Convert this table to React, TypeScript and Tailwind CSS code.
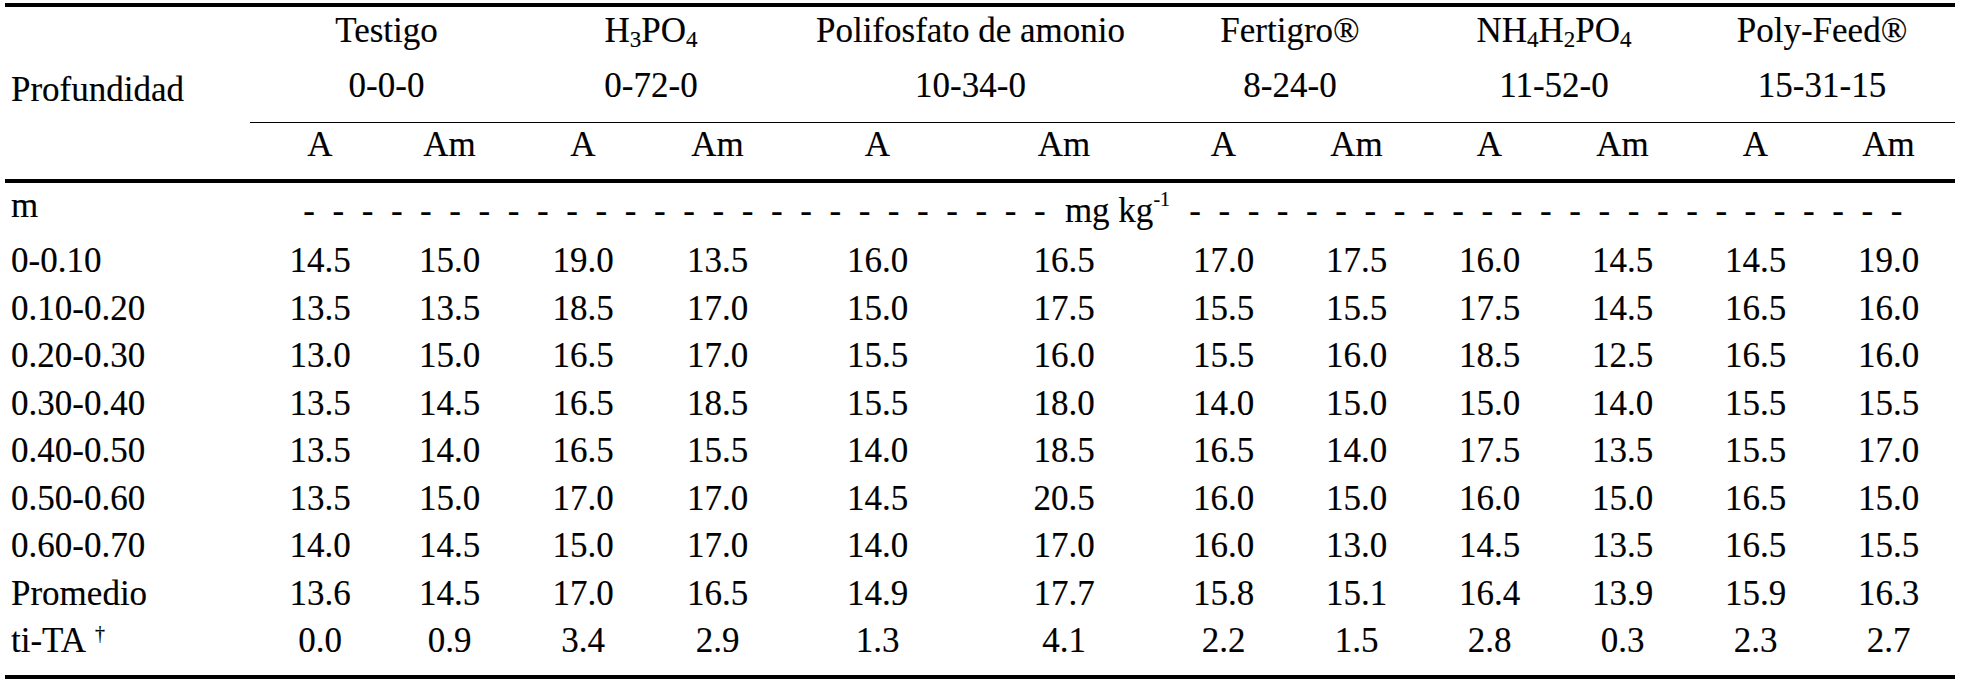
import React from "react";

const Sub = ({ children }: { children: React.ReactNode }) => (
  <span className="relative top-[5px] text-[23px] leading-none">{children}</span>
);

const groups: { name: React.ReactNode; code: string; cls: string }[] = [
  { name: <>Testigo</>, code: "0-0-0", cls: "pl-[8px]" },
  { name: <>H<Sub>3</Sub>PO<Sub>4</Sub></>, code: "0-72-0", cls: "pl-[3px]" },
  { name: <>Polifosfato de amonio</>, code: "10-34-0", cls: "" },
  { name: <>Fertigro®</>, code: "8-24-0", cls: "" },
  { name: <>NH<Sub>4</Sub>H<Sub>2</Sub>PO<Sub>4</Sub></>, code: "11-52-0", cls: "pr-[4px]" },
  { name: <>Poly-Feed®</>, code: "15-31-15", cls: "" },
];

const rows: string[][] = [
  ["0-0.10", "14.5", "15.0", "19.0", "13.5", "16.0", "16.5", "17.0", "17.5", "16.0", "14.5", "14.5", "19.0"],
  ["0.10-0.20", "13.5", "13.5", "18.5", "17.0", "15.0", "17.5", "15.5", "15.5", "17.5", "14.5", "16.5", "16.0"],
  ["0.20-0.30", "13.0", "15.0", "16.5", "17.0", "15.5", "16.0", "15.5", "16.0", "18.5", "12.5", "16.5", "16.0"],
  ["0.30-0.40", "13.5", "14.5", "16.5", "18.5", "15.5", "18.0", "14.0", "15.0", "15.0", "14.0", "15.5", "15.5"],
  ["0.40-0.50", "13.5", "14.0", "16.5", "15.5", "14.0", "18.5", "16.5", "14.0", "17.5", "13.5", "15.5", "17.0"],
  ["0.50-0.60", "13.5", "15.0", "17.0", "17.0", "14.5", "20.5", "16.0", "15.0", "16.0", "15.0", "16.5", "15.0"],
  ["0.60-0.70", "14.0", "14.5", "15.0", "17.0", "14.0", "17.0", "16.0", "13.0", "14.5", "13.5", "16.5", "15.5"],
  ["Promedio", "13.6", "14.5", "17.0", "16.5", "14.9", "17.7", "15.8", "15.1", "16.4", "13.9", "15.9", "16.3"],
  ["ti-TA", "0.0", "0.9", "3.4", "2.9", "1.3", "4.1", "2.2", "1.5", "2.8", "0.3", "2.3", "2.7"],
];

const colGrid =
  "grid grid-cols-[134px_131px_136px_133px_187px_186px_133px_133px_133px_133px_133px_133px]";

const Dashes = ({ n }: { n: number }) => (
  <div className="flex h-full">
    {Array.from({ length: n }).map((_, i) => (
      <span key={i} className="w-[29.24px] shrink-0 text-center">
        -
      </span>
    ))}
  </div>
);

export default function App() {
  return (
    <div className="w-[1962px] h-[683px] bg-white pt-[3px] pl-[5px] text-black text-[35px] font-['Liberation_Serif',serif] [-webkit-text-stroke:0.15px_black]">
      <div className="w-[1950px]">
        <div className="h-[4px] bg-black" />

        {/* Header */}
        <div className="flex">
          <div className="w-[245px] shrink-0 pl-[6px] pt-[66px] leading-[34px] whitespace-nowrap">
            Profundidad
          </div>
          <div className="w-[1705px] flex flex-col">
            <div className="grid grid-cols-[265px_269px_373px_266px_266px_266px]">
              {groups.map((g, i) => (
                <div key={i} className={`h-[49px] leading-[48.5px] text-center whitespace-nowrap ${g.cls}`}>
                  {g.name}
                </div>
              ))}
            </div>
            <div className="grid grid-cols-[265px_269px_373px_266px_266px_266px]">
              {groups.map((g, i) => (
                <div key={i} className={`h-[61px] leading-[60.5px] text-center whitespace-nowrap ${g.cls}`}>
                  {g.code}
                </div>
              ))}
            </div>
            <div className="h-[5px]" />
            <div className="h-px bg-black" />
            <div className={colGrid}>
              {Array.from({ length: 12 }).map((_, i) => (
                <div
                  key={i}
                  className={`h-[44px] leading-[43.5px] text-center ${i === 0 ? "pl-[6px]" : ""}`}
                >
                  {i % 2 === 0 ? "A" : "Am"}
                </div>
              ))}
            </div>
            <div className="h-[12px]" />
          </div>
        </div>

        <div className="h-[4px] bg-black" />

        {/* Units row */}
        <div className="flex h-[54px]">
          <div className="w-[245px] shrink-0 pl-[6px] pt-[6px] leading-[34px]">m</div>
          <div className="flex pt-[11px] leading-[34px] h-[45px]">
            <div className="w-[44.4px] shrink-0" />
            <div className="w-[760.2px] shrink-0">
              <Dashes n={26} />
            </div>
            <div className="w-[125.8px] shrink-0 text-center whitespace-nowrap">
              mg kg<span className="relative -top-[16px] text-[20px] leading-none">-1</span>
            </div>
            <div className="w-[731px] shrink-0">
              <Dashes n={25} />
            </div>
          </div>
        </div>

        {/* Data rows */}
        {rows.map((r, ri) => (
          <div key={ri} className="flex h-[47.5px] leading-[47px]">
            <div className="w-[245px] shrink-0 pl-[6px] whitespace-nowrap">
              {r[0]}
              {ri === rows.length - 1 && (
                <span className="relative -top-[12px] ml-[9px] text-[20px] leading-none">†</span>
              )}
            </div>
            <div className={`w-[1705px] ${colGrid}`}>
              {r.slice(1).map((v, ci) => (
                <div key={ci} className={`text-center ${ci === 0 ? "pl-[6px]" : ""}`}>
                  {v}
                </div>
              ))}
            </div>
          </div>
        ))}

        <div className="h-[10.5px]" />
        <div className="h-[4px] bg-black" />
      </div>
    </div>
  );
}
